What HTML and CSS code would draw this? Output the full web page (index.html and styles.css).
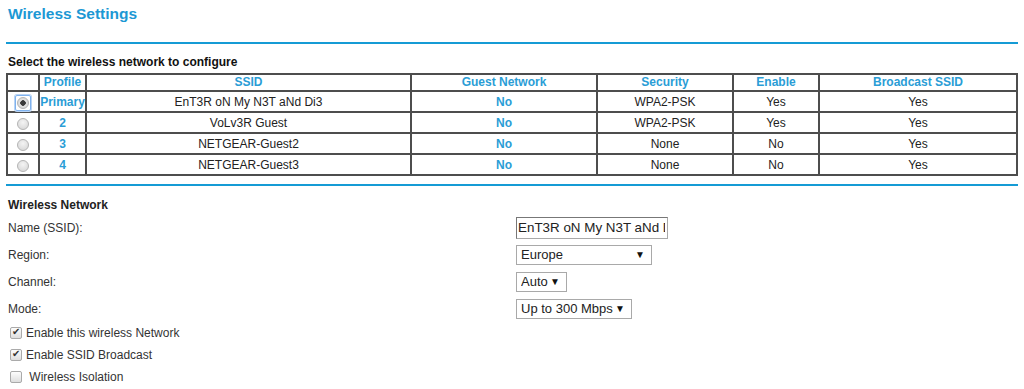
FILE: index.html
```html
<!DOCTYPE html>
<html lang="en">
<head>
    <meta charset="UTF-8">
    <meta name="viewport" content="width=device-width, initial-scale=1.0">
    <title>Wireless Settings</title>
    <link rel="stylesheet" href="styles.css">
</head>
<body>
    <div class="page">
        <h1 class="page-title">Wireless Settings</h1>
        <div class="rule"></div>

        <div class="section-title">Select the wireless network to configure</div>
        <table class="profiles">
            <thead>
                <tr>
                    <th class="col-sel"></th>
                    <th class="col-profile">Profile</th>
                    <th class="col-ssid">SSID</th>
                    <th class="col-guest">Guest Network</th>
                    <th class="col-sec">Security</th>
                    <th class="col-enable">Enable</th>
                    <th class="col-bcast">Broadcast SSID</th>
                </tr>
            </thead>
            <tbody>
                <tr>
                    <td><span class="radio-wrap focused"><input type="radio" name="profile" class="radio" checked></span></td>
                    <td class="blue">Primary</td>
                    <td>EnT3R oN My N3T aNd Di3</td>
                    <td class="blue">No</td>
                    <td>WPA2-PSK</td>
                    <td>Yes</td>
                    <td>Yes</td>
                </tr>
                <tr>
                    <td><span class="radio-wrap"><input type="radio" name="profile" class="radio"></span></td>
                    <td class="blue">2</td>
                    <td>VoLv3R Guest</td>
                    <td class="blue">No</td>
                    <td>WPA2-PSK</td>
                    <td>Yes</td>
                    <td>Yes</td>
                </tr>
                <tr>
                    <td><span class="radio-wrap"><input type="radio" name="profile" class="radio"></span></td>
                    <td class="blue">3</td>
                    <td>NETGEAR-Guest2</td>
                    <td class="blue">No</td>
                    <td>None</td>
                    <td>No</td>
                    <td>Yes</td>
                </tr>
                <tr>
                    <td><span class="radio-wrap"><input type="radio" name="profile" class="radio"></span></td>
                    <td class="blue">4</td>
                    <td>NETGEAR-Guest3</td>
                    <td class="blue">No</td>
                    <td>None</td>
                    <td>No</td>
                    <td>Yes</td>
                </tr>
            </tbody>
        </table>

        <div class="rule rule-low"></div>

        <table class="settings">
            <tr class="head-row">
                <td colspan="2" class="sub-title">Wireless Network</td>
            </tr>
            <tr>
                <td class="label">Name (SSID):</td>
                <td class="ctrl"><input type="text" class="text-in" value="EnT3R oN My N3T aNd Di3"></td>
            </tr>
            <tr>
                <td class="label">Region:</td>
                <td class="ctrl">
                    <span class="sel sel-region">
                        <select><option>Europe</option></select>
                    </span>
                </td>
            </tr>
            <tr>
                <td class="label">Channel:</td>
                <td class="ctrl">
                    <span class="sel sel-channel">
                        <select><option>Auto</option></select>
                    </span>
                </td>
            </tr>
            <tr>
                <td class="label">Mode:</td>
                <td class="ctrl">
                    <span class="sel sel-mode">
                        <select><option>Up to 300 Mbps</option></select>
                    </span>
                </td>
            </tr>
            <tr class="check-row">
                <td colspan="2"><label><input type="checkbox" class="check" checked>Enable this wireless Network</label></td>
            </tr>
            <tr class="check-row">
                <td colspan="2"><label><input type="checkbox" class="check" checked>Enable SSID Broadcast</label></td>
            </tr>
            <tr class="check-row">
                <td colspan="2"><label><input type="checkbox" class="check"> Wireless Isolation</label></td>
            </tr>
        </table>
    </div>
</body>
</html>
```

FILE: styles.css
```css
body {
    margin: 0;
    background: #fff;
    font-family: "Liberation Sans", Arial, sans-serif;
    font-size: 12px;
    color: #222;
}
.page {
    padding: 0 6px;
}
.page-title {
    margin: 5px 0 0 2px;
    font-size: 15.5px;
    line-height: 18px;
    font-weight: bold;
    color: #1c98d4;
}
.rule {
    height: 2px;
    background: #159bd5;
    margin-top: 19px;
}
.rule-low {
    margin-top: 8px;
}
.section-title {
    margin: 11px 0 3px 2px;
    font-weight: bold;
    line-height: 15px;
    color: #111;
}
.profiles {
    width: 1012px;
    border-collapse: collapse;
    border: 2px solid #4d4d4d;
}
.profiles th,
.profiles td {
    border: 2px solid #4d4d4d;
    padding: 0;
    text-align: center;
    white-space: nowrap;
}
.profiles th {
    height: 15px;
    line-height: 15px;
    color: #2a9dd6;
    font-weight: bold;
}
.profiles td {
    height: 19px;
    line-height: 18px;
}
.profiles td.blue {
    color: #2a9dd6;
    font-weight: bold;
}
.col-sel { width: 30px; }
.col-profile { width: 45px; }
.col-ssid { width: 323px; }
.col-guest { width: 184px; }
.col-sec { width: 134px; }
.col-enable { width: 84px; }
.radio-wrap {
    display: inline-block;
    width: 14px;
    height: 14px;
    margin-top: 2px;
    vertical-align: top;
    border: 1px solid transparent;
    border-radius: 2px;
}
.radio-wrap.focused {
    border-color: #7fb2ee;
    box-shadow: 0 0 0 1px #b9d4f5;
}
.radio {
    appearance: none;
    display: block;
    width: 12px;
    height: 12px;
    margin: 1px;
    border-radius: 50%;
    border: 1px solid #b5b5b5;
    background: radial-gradient(circle at 50% 35%, #f4f4f4, #d3d3d3);
}
.radio:checked {
    background: radial-gradient(circle, #3a3a3a 0 2.5px, #e4e4e4 3px, #c9c9c9);
}
.settings {
    width: 1012px;
    border-collapse: collapse;
    margin-top: 10px;
}
.settings td {
    padding: 0 0 0 2px;
    height: 27px;
    vertical-align: middle;
}
.settings td.ctrl {
    padding-left: 0;
}
.settings td.label {
    width: 508px;
    color: #333;
}
.settings .head-row td {
    height: 18px;
}
.sub-title {
    font-weight: bold;
    color: #222;
}
.text-in {
    width: 147px;
    height: 18px;
    margin: 0;
    padding: 1px 2px 1px 1px;
    border: 1px solid #a9a9a9;
    border-top-color: #777;
    border-left-color: #777;
    font-family: "Liberation Sans", Arial, sans-serif;
    font-size: 13.4px;
    color: #222;
    vertical-align: middle;
}
.sel {
    position: relative;
    display: inline-block;
    vertical-align: middle;
}
.sel select {
    appearance: none;
    display: block;
    height: 20px;
    margin: 0;
    padding: 0 0 0 4px;
    border: 1px solid #a9a9a9;
    border-radius: 0;
    background: #fff;
    font-family: "Liberation Sans", Arial, sans-serif;
    font-size: 13px;
    color: #222;
}
.sel::after {
    content: "\25BC";
    position: absolute;
    right: 7px;
    top: 4px;
    font-size: 10px;
    color: #111;
    pointer-events: none;
}
.sel-region select { width: 136px; }
.sel-channel select { width: 51px; }
.sel-mode select { width: 116px; }
.settings .check-row td {
    height: 22px;
    padding-left: 4px;
}
.check-row label {
    color: #333;
}
.check {
    appearance: none;
    width: 12px;
    height: 12px;
    margin: 0 4px 0 0;
    border: 1px solid #aaa;
    border-radius: 2px;
    background: linear-gradient(#fdfdfd, #dedede);
    vertical-align: -2px;
    position: relative;
}
.check:checked::after {
    content: "\2714";
    position: absolute;
    left: 1px;
    top: -2px;
    font-size: 10px;
    color: #333;
}
```
